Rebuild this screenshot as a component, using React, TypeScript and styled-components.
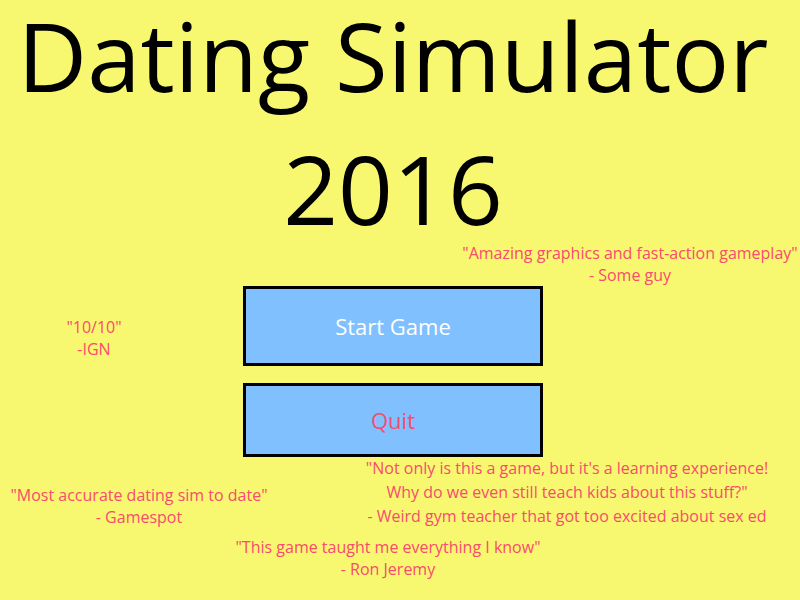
import styled, { createGlobalStyle } from "styled-components";

const GlobalStyle = createGlobalStyle`
  html, body {
    margin: 0;
    padding: 0;
    background-color: #f8f870;
  }
`;

const Screen = styled.div`
  position: relative;
  box-sizing: border-box;
  width: 800px;
  height: 600px;
  padding-right: 14px;
  overflow: hidden;
  background-color: #f8f870;
  display: flex;
  flex-direction: column;
  align-items: center;
  font-family: "Open Sans", "DejaVu Sans", sans-serif;
`;

const Title = styled.h1`
  margin: 0;
  font-size: 96px;
  line-height: 109px;
  font-weight: 400;
  color: #000;
  text-align: center;
`;

const TitleLine = styled.span<{ $gap?: number }>`
  display: block;
  margin-top: ${(p) => p.$gap ?? 0}px;
`;

const Menu = styled.div`
  margin-top: 44px;
  display: flex;
  flex-direction: column;
  gap: 17px;
`;

const MenuButton = styled.button<{ $height: number; $color: string }>`
  box-sizing: border-box;
  width: 300px;
  height: ${(p) => p.$height}px;
  border: 3px solid #000;
  background-color: #80c0ff;
  color: ${(p) => p.$color};
  font-family: inherit;
  font-size: 22px;
  cursor: pointer;
  display: flex;
  align-items: center;
  justify-content: center;
`;

const Quote = styled.div<{ $x: number; $y: number; $lh?: number }>`
  position: absolute;
  left: ${(p) => p.$x}px;
  top: ${(p) => p.$y}px;
  transform: translateX(-50%);
  white-space: nowrap;
  text-align: center;
  color: #f94b6e;
  font-size: 16px;
  line-height: ${(p) => p.$lh ?? 22}px;
`;

const quotes = [
  {
    x: 630,
    y: 242,
    lines: ['"Amazing graphics and fast-action gameplay"', "- Some guy"],
  },
  { x: 94, y: 316, lines: ['"10/10"', "-IGN"] },
  {
    x: 139,
    y: 484,
    lines: ['"Most accurate dating sim to date"', "- Gamespot"],
  },
  {
    x: 567,
    y: 456,
    lh: 24,
    lines: [
      "\"Not only is this a game, but it's a learning experience!",
      'Why do we even still teach kids about this stuff?"',
      "- Weird gym teacher that got too excited about sex ed",
    ],
  },
  {
    x: 388,
    y: 536,
    lines: ['"This game taught me everything I know"', "- Ron Jeremy"],
  },
];

export default function App() {
  return (
    <>
      <GlobalStyle />
      <Screen>
        <Title>
          <TitleLine>Dating Simulator</TitleLine>
          <TitleLine $gap={24}>2016</TitleLine>
        </Title>
        <Menu>
          <MenuButton $height={80} $color="#ffffff">
            Start Game
          </MenuButton>
          <MenuButton $height={74} $color="#f94b6e">
            Quit
          </MenuButton>
        </Menu>
        {quotes.map((q, i) => (
          <Quote key={i} $x={q.x} $y={q.y} $lh={q.lh}>
            {q.lines.map((line, j) => (
              <div key={j}>{line}</div>
            ))}
          </Quote>
        ))}
      </Screen>
    </>
  );
}
